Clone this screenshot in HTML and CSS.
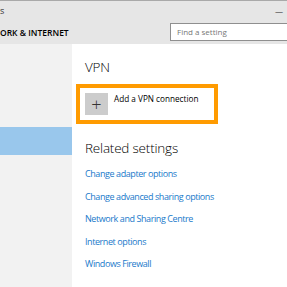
FILE: index.html
```html
<!DOCTYPE html>
<html lang="en">

<head>
  <meta charset="UTF-8" />
  <title>Settings - VPN</title>
  <link rel="stylesheet" href="styles.css">
</head>

<body>
  <div class="window">
    <!-- title bar -->
    <div class="titlebar">
      <span class="app">s</span>
      <span class="min">&#8212;</span>
    </div>

    <!-- header with search -->
    <header class="head">
      <h2>ORK &amp; INTERNET</h2>
      <div class="search">Find a setting</div>
    </header>

    <div class="body">
      <!-- left navigation -->
      <aside class="side">
        <div class="side-item active"></div>
      </aside>

      <!-- content -->
      <main class="cont">
        <h3>VPN</h3>
        <div class="add-box">
          <span class="plus">+</span>
          <span class="add-text">Add a VPN connection</span>
        </div>

        <h3 class="related">Related settings</h3>
        <ul class="links">
          <li><a href="#">Change adapter options</a></li>
          <li><a href="#">Change advanced sharing options</a></li>
          <li><a href="#">Network and Sharing Centre</a></li>
          <li><a href="#">Internet options</a></li>
          <li><a href="#">Windows Firewall</a></li>
        </ul>
      </main>
    </div>
  </div>
</body>

</html>
```

FILE: styles.css
```css
/* reset */
html,
body,
ul,
h2,
h3 {
  margin: 0;
  padding: 0;
}

ul {
  list-style: none;
}

body {
  font-family: "Open Sans", "Noto Sans", sans-serif;
  overflow: hidden;
}

.window {
  width: 287px;
  height: 287px;
  display: flex;
  flex-direction: column;
  border-top: 1px solid #a9a9a9;
  box-sizing: border-box;
}

/* title bar */
.titlebar {
  height: 19px;
  background-color: #e6e6e6;
  display: flex;
  justify-content: space-between;
  align-items: center;
  font-size: 9px;
  color: #333;
}

.titlebar .min {
  margin-right: 4px;
  font-size: 8px;
}

/* header */
.head {
  height: 24px;
  background-color: #e6e6e6;
  display: flex;
  justify-content: space-between;
  align-items: center;
}

.head h2 {
  font-size: 8.5px;
  font-weight: 600;
  color: #000;
}

.search {
  width: 120px;
  height: 18px;
  margin-right: -3px;
  box-sizing: border-box;
  border: 1px solid #8f8f8f;
  background-color: #fff;
  padding-left: 6px;
  font-size: 8px;
  line-height: 16px;
  color: #777;
}

/* body */
.body {
  flex: 1;
  display: flex;
}

.side {
  width: 72px;
  flex-shrink: 0;
  background-color: #f2f2f2;
  padding-top: 83px;
}

.side-item {
  height: 28px;
}

.side-item.active {
  background-color: #99c7ec;
}

.cont {
  flex: 1;
  background-color: #fff;
  padding: 13px 0 0 13px;
}

.cont h3 {
  font-size: 13.5px;
  font-weight: 300;
  color: #000;
  line-height: 20px;
  letter-spacing: -.2px;
}

/* add button box */
.add-box {
  width: 125px;
  margin: 7px 0 0 -9px;
  border: 4px solid #ff9b00;
  padding: 5px 4px 5px 5px;
  display: flex;
  align-items: flex-start;
  gap: 6px;
}

.plus {
  width: 23px;
  height: 22px;
  background-color: #cccccc;
  display: flex;
  justify-content: center;
  align-items: center;
  font-size: 18px;
  font-weight: 300;
  color: #333;
}

.add-text {
  font-size: 8.2px;
  color: #000;
  line-height: 12px;
}

.related {
  margin-top: 14px;
}

.links {
  padding-top: 2px;
}

.links li {
  height: 22.5px;
  line-height: 22.5px;
}

.links a {
  font-size: 9px;
  letter-spacing: -.42px;
  color: #1979ca;
  text-decoration: none;
}
```
